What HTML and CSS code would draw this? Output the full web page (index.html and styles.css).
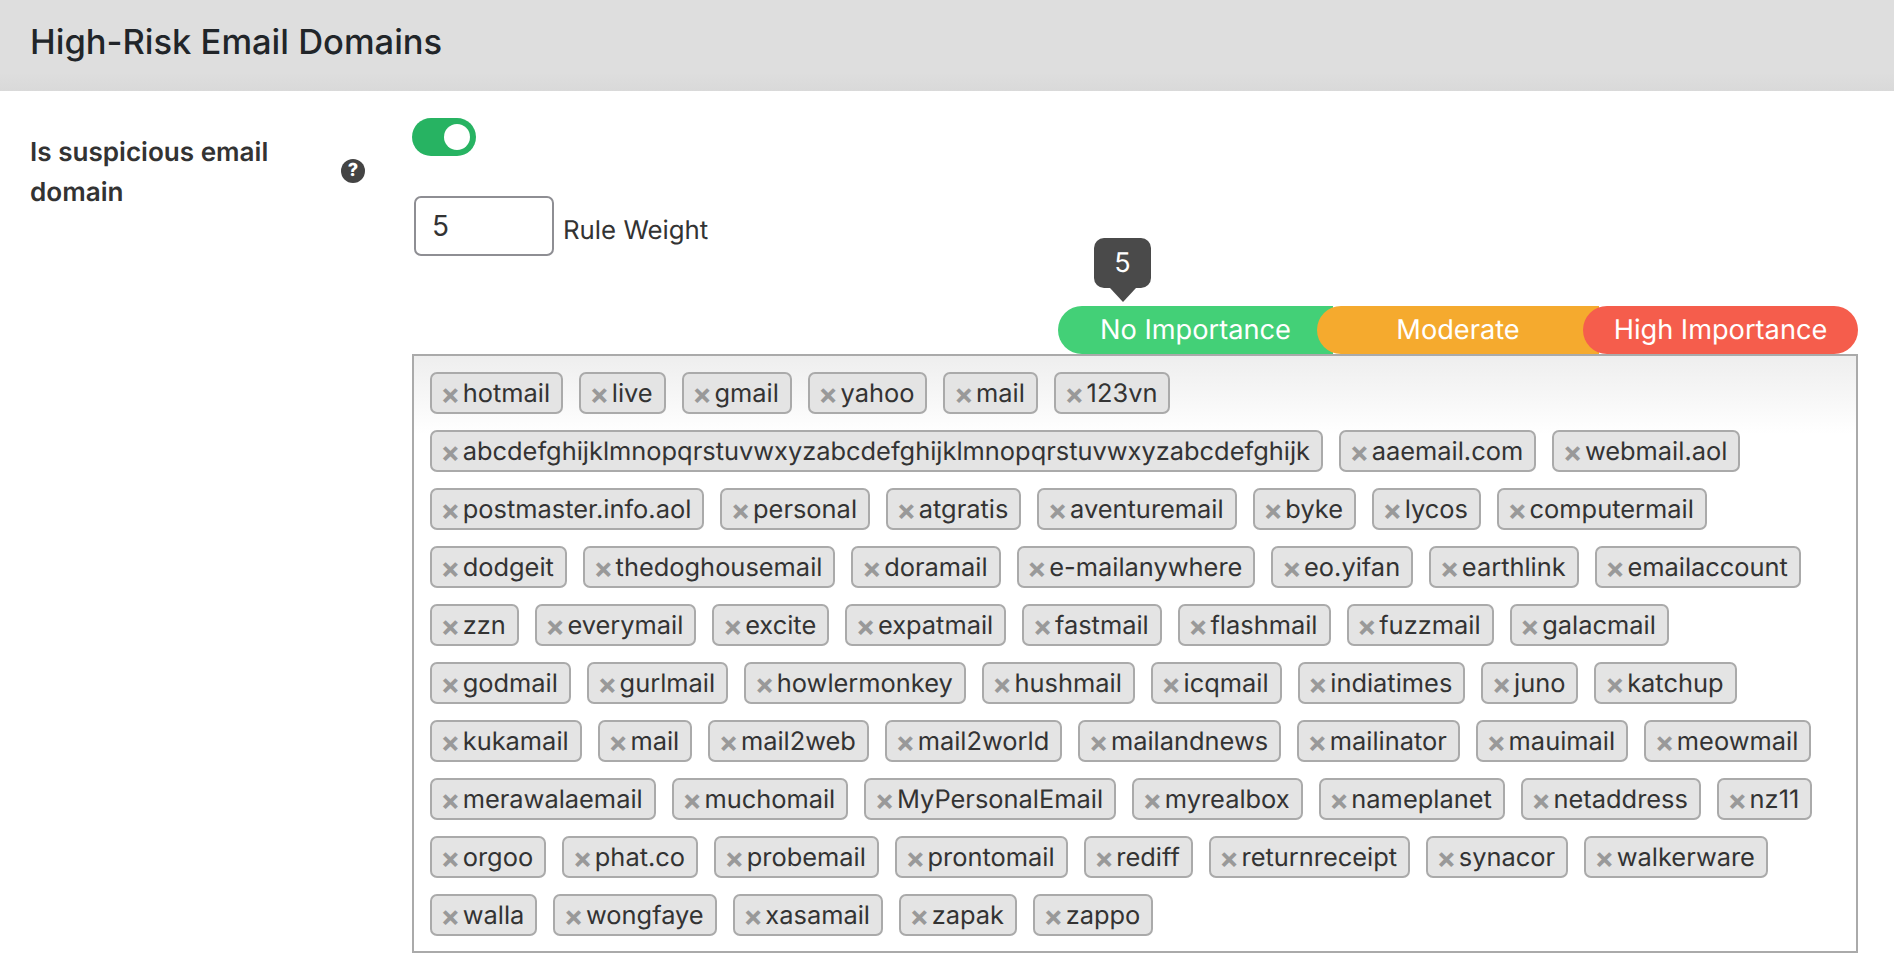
FILE: index.html
```html
<!DOCTYPE html>
<html lang="en">
<head>
<meta charset="utf-8">
<title>High-Risk Email Domains</title>
<link rel="stylesheet" href="styles.css">
</head>
<body>
<header class="section-header"><h1>High-Risk Email Domains</h1></header>
<main class="rule-row">
  <div class="rule-label">
    <label>Is suspicious email domain</label>
    <span class="help">?</span>
  </div>
  <div class="rule-body">
    <span class="toggle"></span>
    <div class="weight-row">
      <input class="weight-input" type="text" value="5">
      <span class="weight-label">Rule Weight</span>
    </div>
    <div class="slider">
      <div class="slider-tip">5</div>
      <div class="seg seg-green">No Importance</div>
      <div class="seg seg-orange">Moderate</div>
      <div class="seg seg-red">High Importance</div>
    </div>
    <div class="tags">
      <span class="tag"><b>×</b>hotmail</span>
      <span class="tag"><b>×</b>live</span>
      <span class="tag"><b>×</b>gmail</span>
      <span class="tag"><b>×</b>yahoo</span>
      <span class="tag"><b>×</b>mail</span>
      <span class="tag"><b>×</b>123vn</span>
      <span class="tag"><b>×</b>abcdefghijklmnopqrstuvwxyzabcdefghijklmnopqrstuvwxyzabcdefghijk</span>
      <span class="tag"><b>×</b>aaemail.com</span>
      <span class="tag"><b>×</b>webmail.aol</span>
      <span class="tag"><b>×</b>postmaster.info.aol</span>
      <span class="tag"><b>×</b>personal</span>
      <span class="tag"><b>×</b>atgratis</span>
      <span class="tag"><b>×</b>aventuremail</span>
      <span class="tag"><b>×</b>byke</span>
      <span class="tag"><b>×</b>lycos</span>
      <span class="tag"><b>×</b>computermail</span>
      <span class="tag"><b>×</b>dodgeit</span>
      <span class="tag"><b>×</b>thedoghousemail</span>
      <span class="tag"><b>×</b>doramail</span>
      <span class="tag"><b>×</b>e-mailanywhere</span>
      <span class="tag"><b>×</b>eo.yifan</span>
      <span class="tag"><b>×</b>earthlink</span>
      <span class="tag"><b>×</b>emailaccount</span>
      <span class="tag"><b>×</b>zzn</span>
      <span class="tag"><b>×</b>everymail</span>
      <span class="tag"><b>×</b>excite</span>
      <span class="tag"><b>×</b>expatmail</span>
      <span class="tag"><b>×</b>fastmail</span>
      <span class="tag"><b>×</b>flashmail</span>
      <span class="tag"><b>×</b>fuzzmail</span>
      <span class="tag"><b>×</b>galacmail</span>
      <span class="tag"><b>×</b>godmail</span>
      <span class="tag"><b>×</b>gurlmail</span>
      <span class="tag"><b>×</b>howlermonkey</span>
      <span class="tag"><b>×</b>hushmail</span>
      <span class="tag"><b>×</b>icqmail</span>
      <span class="tag"><b>×</b>indiatimes</span>
      <span class="tag"><b>×</b>juno</span>
      <span class="tag"><b>×</b>katchup</span>
      <span class="tag"><b>×</b>kukamail</span>
      <span class="tag"><b>×</b>mail</span>
      <span class="tag"><b>×</b>mail2web</span>
      <span class="tag"><b>×</b>mail2world</span>
      <span class="tag"><b>×</b>mailandnews</span>
      <span class="tag"><b>×</b>mailinator</span>
      <span class="tag"><b>×</b>mauimail</span>
      <span class="tag"><b>×</b>meowmail</span>
      <span class="tag"><b>×</b>merawalaemail</span>
      <span class="tag"><b>×</b>muchomail</span>
      <span class="tag"><b>×</b>MyPersonalEmail</span>
      <span class="tag"><b>×</b>myrealbox</span>
      <span class="tag"><b>×</b>nameplanet</span>
      <span class="tag"><b>×</b>netaddress</span>
      <span class="tag"><b>×</b>nz11</span>
      <span class="tag"><b>×</b>orgoo</span>
      <span class="tag"><b>×</b>phat.co</span>
      <span class="tag"><b>×</b>probemail</span>
      <span class="tag"><b>×</b>prontomail</span>
      <span class="tag"><b>×</b>rediff</span>
      <span class="tag"><b>×</b>returnreceipt</span>
      <span class="tag"><b>×</b>synacor</span>
      <span class="tag"><b>×</b>walkerware</span>
      <span class="tag"><b>×</b>walla</span>
      <span class="tag"><b>×</b>wongfaye</span>
      <span class="tag"><b>×</b>xasamail</span>
      <span class="tag"><b>×</b>zapak</span>
      <span class="tag"><b>×</b>zappo</span>
    </div>
  </div>
</main>
</body>
</html>
```
FILE: styles.css
```css
* { box-sizing: border-box; }
html, body { margin: 0; padding: 0; background: #fff; }
body { font-family: Inter, "Liberation Sans", sans-serif; color: #333; font-size: 25.42px; overflow: hidden; text-rendering: geometricPrecision; }

.section-header {
  height: 91px;
  padding: 0 30px 7px;
  display: flex;
  align-items: center;
  background: linear-gradient(to bottom, #dedede 0, #dedede 80%, #d9d9d9 100%);
}
.section-header h1 { margin: 0; font-size: 34.5px; font-weight: 500; color: #212529; }

.rule-row { display: flex; padding: 27px 36px 0 30px; }
.rule-label { width: 382px; flex: none; display: flex; }
.rule-label label { width: 264px; font-size: 26.1px; font-weight: 600; line-height: 40px; margin-top: 15px; color: #333; }
.help {
  width: 24px; height: 24px; border-radius: 50%; background: #444; color: #fff;
  font-size: 18px; font-weight: 800; text-align: center; line-height: 24px;
  margin-top: 41px; margin-left: 47px; flex: none;
}

.rule-body { flex: 1; min-width: 0; display: flex; flex-direction: column; }
.toggle {
  display: block; position: relative; width: 64px; height: 38px; border-radius: 19px; background: #27b362;
}
.toggle::after {
  content: ""; position: absolute; right: 6px; top: 6px; width: 26px; height: 26px; border-radius: 50%; background: #fff;
}
.weight-row { display: flex; align-items: center; margin: 40px 0 0 2px; height: 60px; }
.weight-input {
  width: 140px; height: 60px; border: 2px solid #8e8e93; border-radius: 7px; padding: 0 16px 1px;
  font: 400 28px Inter, sans-serif; color: #333; background: #fff; outline: none;
}
.weight-label { margin-left: 9px; padding-top: 8px; font-size: 25.8px; }

.slider { position: relative; display: flex; justify-content: flex-end; margin-top: 50px; padding-left: 646px; height: 48px; }
.slider-tip {
  position: absolute; left: 682px; top: -68px; width: 57px; height: 50px; border-radius: 10px;
  background: #4a4a4a; color: #fff; text-align: center; line-height: 50px; z-index: 4; font-size: 27px;
}
.slider-tip::after {
  content: ""; position: absolute; left: 16px; top: 50px;
  border-left: 13px solid transparent; border-right: 13px solid transparent; border-top: 14px solid #4a4a4a;
}
.seg { flex: none; height: 48px; border-radius: 24px; color: #fff; text-align: center; line-height: 48px; position: relative; font-size: 27.2px; }
.seg-green { width: 275px; background: #43d077; border-radius: 24px 0 0 24px; }
.seg-orange { width: 282px; margin-left: -16px; background: #f5aa2e; border-radius: 24px 0 0 24px; }
.seg-red { width: 275px; margin-left: -16px; background: #f55d4c; }

.tags {
  display: flex; flex-wrap: wrap; align-content: flex-start; gap: 16px 16px;
  padding: 16px 36px 16px 16px; height: 599px;
  border: 2px solid #aaa;
  background: linear-gradient(to bottom, #eeeeee 0, #ffffff 78px);
}
.tag {
  display: flex; align-items: center; height: 42px; padding: 0 11px 0 8.5px;
  border: 2px solid #aaa; border-radius: 7px; background: #e4e4e4; color: #333; white-space: nowrap;
}
.tag b { color: #999; font-weight: 700; margin-right: 2.5px; font-size: 29px; line-height: 1; }
```
